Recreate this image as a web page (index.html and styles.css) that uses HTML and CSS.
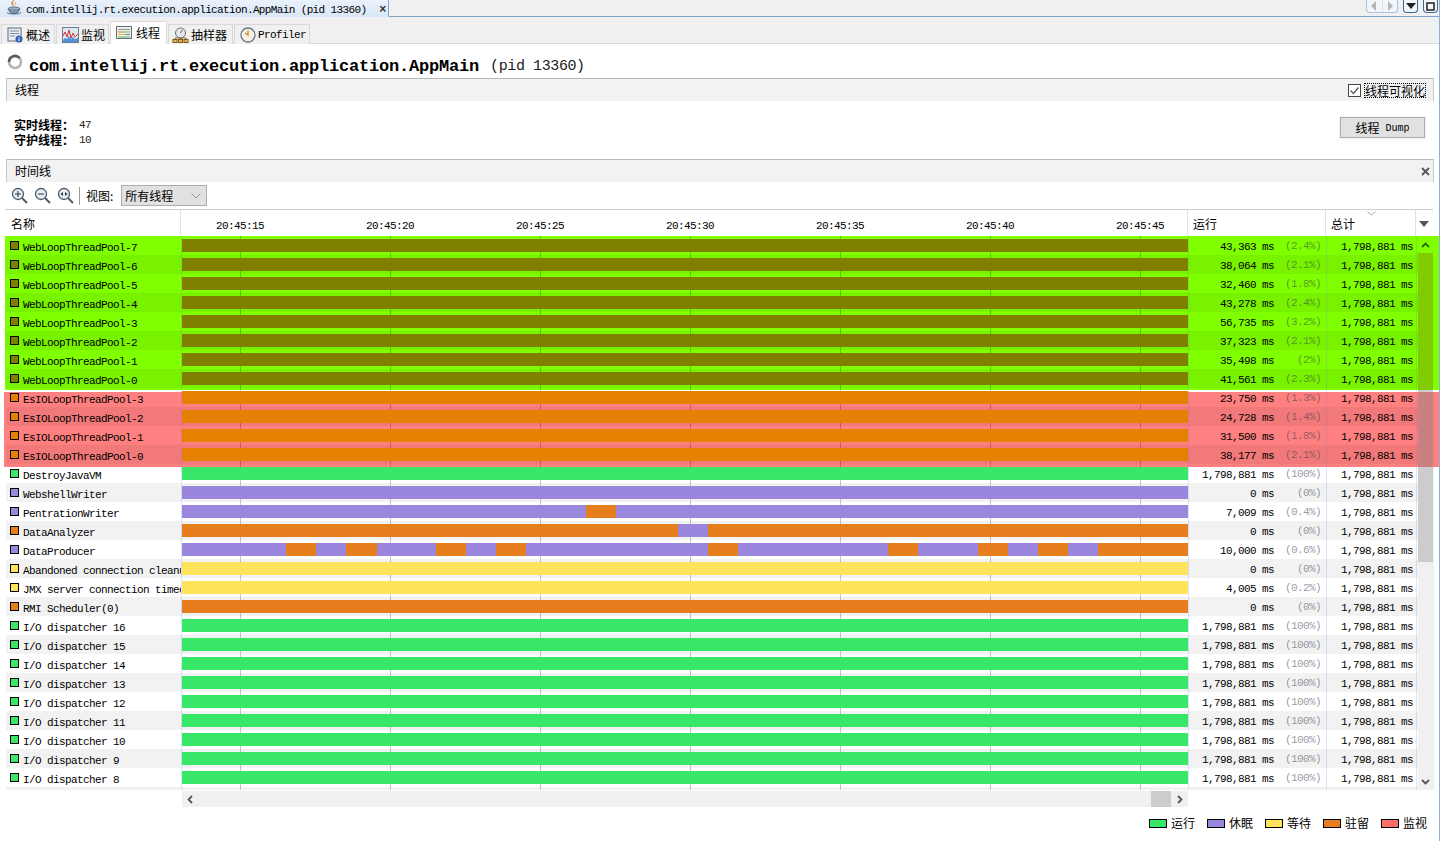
FILE: index.html
```html
<!DOCTYPE html>
<html lang="zh">
<head>
<meta charset="utf-8">
<title>VisualVM</title>
<link rel="stylesheet" href="styles.css">
</head>
<body>
<div class="window">
  <div class="docbar">
    <div class="doctab">
      <svg class="ic-java" width="16" height="16" viewBox="0 0 16 16"><path d="M8 0c1 2-2 3-1 5 .4 1 1 1.500 1 2-2-1-3-2-2.500-3.500C6 2 7.500 2 8 0z" fill="#e8701a"/><path d="M10 3c.5 1.500-1 2-.6 3.500-1-.8-.8-2.500.6-3.500z" fill="#e8a01a"/><ellipse cx="8" cy="10" rx="6" ry="2" fill="#9fb4c8" stroke="#5a6f86"/><path d="M3 10c0 3 2 4.500 5 4.500s5-1.500 5-4.500" fill="#7f96ad" stroke="#4f6379"/><path d="M1 13.500c2 2 12 2 14 0" fill="none" stroke="#5a6f86"/></svg>
      <span class="doctitle">com.intellij.rt.execution.application.AppMain (pid 13360)</span>
      <span class="docclose">×</span>
    </div>
    <div class="docbtns">
      <div class="nav-pair">
        <span class="navbtn"><svg width="8" height="10" viewBox="0 0 8 10"><path d="M6 0v10L1 5z" fill="#b4b4b4"/></svg></span>
        <span class="navbtn"><svg width="8" height="10" viewBox="0 0 8 10"><path d="M2 0v10l5-5z" fill="#b4b4b4"/></svg></span>
      </div>
      <span class="winbtn"><svg width="10" height="6" viewBox="0 0 10 6"><path d="M0 0h10L5 6z" fill="#222"/></svg></span>
      <span class="winbtn"><svg width="9" height="9" viewBox="0 0 9 9"><rect x="1" y="1" width="7" height="7" fill="none" stroke="#222" stroke-width="1.500"/></svg></span>
    </div>
  </div>

  <div class="subtabs">
    <div class="subtab t1">
      <svg width="16" height="16" viewBox="0 0 16 16"><rect x="1" y="1" width="13" height="13" fill="#e8edf3" stroke="#5e6b7b"/><path d="M3 4h9M3 6.500h9M3 9h5" stroke="#7d8a9a"/><circle cx="12" cy="12" r="3.500" fill="#2f62b5"/><path d="M12 10v.8M12 11.500v2.500" stroke="#fff"/></svg>
      <span class="cjk">概述</span>
    </div>
    <div class="subtab t2">
      <svg width="17" height="16" viewBox="0 0 17 16"><rect x=".5" y=".5" width="16" height="15" fill="#dfe7f0" stroke="#6d7c8e"/><path d="M1 9l2-4 2 5 2-7 2 8 2-5 2 4 3-3" fill="none" stroke="#d0342c"/><path d="M1 13l2-2 2 1 2-3 2 3 2-2 2 2 3-1v4H1z" fill="#4f92d8"/></svg>
      <span class="cjk">监视</span>
    </div>
    <div class="subtab t3 active">
      <svg width="16" height="14" viewBox="0 0 16 14"><rect x=".5" y=".5" width="15" height="12" fill="#eef1e4" stroke="#66707c"/><path d="M2 3.500h12" stroke="#8a96a4"/><path d="M2 6h5" stroke="#d97a2b"/><path d="M7 6h7" stroke="#5bb56a"/><path d="M2 8.500h7" stroke="#dcc24a"/><path d="M9 8.500h5" stroke="#8a78cc"/><path d="M2 11h12" stroke="#5bb56a"/></svg>
      <span class="cjk">线程</span>
    </div>
    <div class="subtab t4">
      <svg width="17" height="16" viewBox="0 0 17 16"><circle cx="8.500" cy="6" r="5" fill="#e4e8ee" stroke="#66707c"/><path d="M8.500 6l2-3" stroke="#c0392b"/><path d="M3 11v2M8.500 11v2M14 11v2M3 11h11" stroke="#8a6a2a"/><rect x="1" y="12.500" width="4" height="3" fill="#eab54a" stroke="#7a5a1a"/><rect x="6.500" y="12.500" width="4" height="3" fill="#eab54a" stroke="#7a5a1a"/><rect x="12" y="12.500" width="4" height="3" fill="#eab54a" stroke="#7a5a1a"/></svg>
      <span class="cjk">抽样器</span>
    </div>
    <div class="subtab t5">
      <svg width="16" height="16" viewBox="0 0 16 16"><circle cx="8" cy="8" r="7" fill="#f4f1e6" stroke="#6b7684" stroke-width="1.300"/><path d="M8 3.500V8l-3-2" fill="none" stroke="#d9822b" stroke-width="1.300"/></svg>
      <span class="mono">Profiler</span>
    </div>
  </div>

  <div class="apptitle">
    <svg class="spinner" width="16" height="16" viewBox="0 0 16 16"><circle cx="8" cy="8" r="6" fill="none" stroke="#b4b4b4" stroke-width="2.600"/><path d="M2 8a6 6 0 0 1 10.500-4" fill="none" stroke="#5c5c5c" stroke-width="2.600"/></svg>
    <span class="appname">com.intellij.rt.execution.application.AppMain</span>
    <span class="apppid">(pid 13360)</span>
  </div>

  <div class="section sec-thread">
    <span class="cjk">线程</span>
    <label class="vis">
      <svg width="13" height="13" viewBox="0 0 13 13"><rect x=".5" y=".5" width="12" height="12" fill="#fff" stroke="#444"/><path d="M2.500 6.500l3 3 5-6" fill="none" stroke="#555" stroke-width="1.200"/></svg>
      <span class="vis-label cjk">线程可视化</span>
    </label>
  </div>

  <div class="stats">
    <div class="stat-lines">
      <div class="stat"><b class="cjk">实时线程：</b><span class="mono">47</span></div>
      <div class="stat"><b class="cjk">守护线程：</b><span class="mono">10</span></div>
    </div>
    <div class="dump"><span class="cjk">线程</span><span class="mono dump-l">Dump</span></div>
  </div>

  <div class="section sec-time">
    <span class="cjk">时间线</span>
    <svg class="closex" width="9" height="9" viewBox="0 0 9 9"><path d="M1 1l7 7M8 1L1 8" stroke="#555" stroke-width="1.800"/></svg>
  </div>

  <div class="toolbar">
    <svg width="17" height="17" viewBox="0 0 17 17"><circle cx="7" cy="7" r="5.500" fill="#e6eef7" stroke="#4c5a6a" stroke-width="1.300"/><path d="M11 11l5 5" stroke="#4c5a6a" stroke-width="2"/><path d="M4 7h6M7 4v6" stroke="#333"/></svg>
    <svg width="17" height="17" viewBox="0 0 17 17"><circle cx="7" cy="7" r="5.500" fill="#e6eef7" stroke="#4c5a6a" stroke-width="1.300"/><path d="M11 11l5 5" stroke="#4c5a6a" stroke-width="2"/><path d="M4 7h6" stroke="#333"/></svg>
    <svg width="17" height="17" viewBox="0 0 17 17"><circle cx="7" cy="7" r="5.500" fill="#e6eef7" stroke="#4c5a6a" stroke-width="1.300"/><path d="M11 11l5 5" stroke="#4c5a6a" stroke-width="2"/><path d="M3.500 7L6 5v4zM10.500 7L8 5v4z" fill="#333"/></svg>
    <span class="tool-sep"></span>
    <span class="cjk view-label">视图:</span>
    <div class="select"><span class="cjk">所有线程</span><svg width="10" height="6" viewBox="0 0 10 6"><path d="M.5.500L5 5 9.500.5" fill="none" stroke="#999"/></svg></div>
  </div>

  <div class="thead">
    <div class="th th-name cjk">名称</div>
    <div class="th th-time mono"><span>20:45:15</span><span>20:45:20</span><span>20:45:25</span><span>20:45:30</span><span>20:45:35</span><span>20:45:40</span><span>20:45:45</span></div>
    <div class="th th-run cjk">运行</div>
    <div class="th th-tot cjk">总计<svg class="sort" width="9" height="5" viewBox="0 0 9 5"><path d="M.5.500L4.500 4 8.500.5" fill="none" stroke="#aaa"/></svg></div>
    <div class="th th-menu"><svg width="10" height="6" viewBox="0 0 10 6"><path d="M0 0h10L5 6z" fill="#555"/></svg></div>
  </div>

  <div class="tbody">
    <div class="hl hl-green"></div>
    <div class="hl hl-red"></div>
    <div class="rows mono">
      <div class="row"><div class="name"><i class="sw c-hg"></i><span>WebLoopThreadPool-7</span></div><div class="tl"><div class="bar c-hg"></div></div><div class="run"><span>43,363 ms</span><span class="pct">(2.4%)</span></div><div class="tot">1,798,881 ms</div></div>
      <div class="row"><div class="name"><i class="sw c-hg"></i><span>WebLoopThreadPool-6</span></div><div class="tl"><div class="bar c-hg"></div></div><div class="run"><span>38,064 ms</span><span class="pct">(2.1%)</span></div><div class="tot">1,798,881 ms</div></div>
      <div class="row"><div class="name"><i class="sw c-hg"></i><span>WebLoopThreadPool-5</span></div><div class="tl"><div class="bar c-hg"></div></div><div class="run"><span>32,460 ms</span><span class="pct">(1.8%)</span></div><div class="tot">1,798,881 ms</div></div>
      <div class="row"><div class="name"><i class="sw c-hg"></i><span>WebLoopThreadPool-4</span></div><div class="tl"><div class="bar c-hg"></div></div><div class="run"><span>43,278 ms</span><span class="pct">(2.4%)</span></div><div class="tot">1,798,881 ms</div></div>
      <div class="row"><div class="name"><i class="sw c-hg"></i><span>WebLoopThreadPool-3</span></div><div class="tl"><div class="bar c-hg"></div></div><div class="run"><span>56,735 ms</span><span class="pct">(3.2%)</span></div><div class="tot">1,798,881 ms</div></div>
      <div class="row"><div class="name"><i class="sw c-hg"></i><span>WebLoopThreadPool-2</span></div><div class="tl"><div class="bar c-hg"></div></div><div class="run"><span>37,323 ms</span><span class="pct">(2.1%)</span></div><div class="tot">1,798,881 ms</div></div>
      <div class="row"><div class="name"><i class="sw c-hg"></i><span>WebLoopThreadPool-1</span></div><div class="tl"><div class="bar c-hg"></div></div><div class="run"><span>35,498 ms</span><span class="pct">(2%)</span></div><div class="tot">1,798,881 ms</div></div>
      <div class="row"><div class="name"><i class="sw c-hg"></i><span>WebLoopThreadPool-0</span></div><div class="tl"><div class="bar c-hg"></div></div><div class="run"><span>41,561 ms</span><span class="pct">(2.3%)</span></div><div class="tot">1,798,881 ms</div></div>
      <div class="row"><div class="name"><i class="sw c-hr"></i><span>EsIOLoopThreadPool-3</span></div><div class="tl"><div class="bar c-hr"></div></div><div class="run"><span>23,750 ms</span><span class="pct">(1.3%)</span></div><div class="tot">1,798,881 ms</div></div>
      <div class="row"><div class="name"><i class="sw c-hr"></i><span>EsIOLoopThreadPool-2</span></div><div class="tl"><div class="bar c-hr"></div></div><div class="run"><span>24,728 ms</span><span class="pct">(1.4%)</span></div><div class="tot">1,798,881 ms</div></div>
      <div class="row"><div class="name"><i class="sw c-hr"></i><span>EsIOLoopThreadPool-1</span></div><div class="tl"><div class="bar c-hr"></div></div><div class="run"><span>31,500 ms</span><span class="pct">(1.8%)</span></div><div class="tot">1,798,881 ms</div></div>
      <div class="row"><div class="name"><i class="sw c-hr"></i><span>EsIOLoopThreadPool-0</span></div><div class="tl"><div class="bar c-hr"></div></div><div class="run"><span>38,177 ms</span><span class="pct">(2.1%)</span></div><div class="tot">1,798,881 ms</div></div>
      <div class="row"><div class="name"><i class="sw c-run"></i><span>DestroyJavaVM</span></div><div class="tl"><div class="bar c-run"></div></div><div class="run"><span>1,798,881 ms</span><span class="pct">(100%)</span></div><div class="tot">1,798,881 ms</div></div>
      <div class="row"><div class="name"><i class="sw c-slp"></i><span>WebshellWriter</span></div><div class="tl"><div class="bar c-slp"></div></div><div class="run"><span>0 ms</span><span class="pct">(0%)</span></div><div class="tot">1,798,881 ms</div></div>
      <div class="row"><div class="name"><i class="sw c-slp"></i><span>PentrationWriter</span></div><div class="tl"><div class="bar c-slp"><b class="seg c-prk" style="margin-left:404px;width:30px"></b></div></div><div class="run"><span>7,009 ms</span><span class="pct">(0.4%)</span></div><div class="tot">1,798,881 ms</div></div>
      <div class="row"><div class="name"><i class="sw c-prk"></i><span>DataAnalyzer</span></div><div class="tl"><div class="bar c-prk"><b class="seg c-slp" style="margin-left:496px;width:30px"></b></div></div><div class="run"><span>0 ms</span><span class="pct">(0%)</span></div><div class="tot">1,798,881 ms</div></div>
      <div class="row"><div class="name"><i class="sw c-slp"></i><span>DataProducer</span></div><div class="tl"><div class="bar c-slp"><b class="seg c-prk" style="margin-left:104px;width:30px"></b><b class="seg c-prk" style="margin-left:30px;width:31px"></b><b class="seg c-prk" style="margin-left:59px;width:30px"></b><b class="seg c-prk" style="margin-left:30px;width:30px"></b><b class="seg c-prk" style="margin-left:182px;width:30px"></b><b class="seg c-prk" style="margin-left:150px;width:30px"></b><b class="seg c-prk" style="margin-left:60px;width:30px"></b><b class="seg c-prk" style="margin-left:30px;width:30px"></b><b class="seg c-prk" style="margin-left:30px;width:90px"></b></div></div><div class="run"><span>10,000 ms</span><span class="pct">(0.6%)</span></div><div class="tot">1,798,881 ms</div></div>
      <div class="row"><div class="name"><i class="sw c-wait"></i><span>Abandoned connection cleanup</span></div><div class="tl"><div class="bar c-wait"></div></div><div class="run"><span>0 ms</span><span class="pct">(0%)</span></div><div class="tot">1,798,881 ms</div></div>
      <div class="row"><div class="name"><i class="sw c-wait"></i><span>JMX server connection timeout</span></div><div class="tl"><div class="bar c-wait"></div></div><div class="run"><span>4,005 ms</span><span class="pct">(0.2%)</span></div><div class="tot">1,798,881 ms</div></div>
      <div class="row"><div class="name"><i class="sw c-prk"></i><span>RMI Scheduler(0)</span></div><div class="tl"><div class="bar c-prk"></div></div><div class="run"><span>0 ms</span><span class="pct">(0%)</span></div><div class="tot">1,798,881 ms</div></div>
      <div class="row"><div class="name"><i class="sw c-run"></i><span>I/O dispatcher 16</span></div><div class="tl"><div class="bar c-run"></div></div><div class="run"><span>1,798,881 ms</span><span class="pct">(100%)</span></div><div class="tot">1,798,881 ms</div></div>
      <div class="row"><div class="name"><i class="sw c-run"></i><span>I/O dispatcher 15</span></div><div class="tl"><div class="bar c-run"></div></div><div class="run"><span>1,798,881 ms</span><span class="pct">(100%)</span></div><div class="tot">1,798,881 ms</div></div>
      <div class="row"><div class="name"><i class="sw c-run"></i><span>I/O dispatcher 14</span></div><div class="tl"><div class="bar c-run"></div></div><div class="run"><span>1,798,881 ms</span><span class="pct">(100%)</span></div><div class="tot">1,798,881 ms</div></div>
      <div class="row"><div class="name"><i class="sw c-run"></i><span>I/O dispatcher 13</span></div><div class="tl"><div class="bar c-run"></div></div><div class="run"><span>1,798,881 ms</span><span class="pct">(100%)</span></div><div class="tot">1,798,881 ms</div></div>
      <div class="row"><div class="name"><i class="sw c-run"></i><span>I/O dispatcher 12</span></div><div class="tl"><div class="bar c-run"></div></div><div class="run"><span>1,798,881 ms</span><span class="pct">(100%)</span></div><div class="tot">1,798,881 ms</div></div>
      <div class="row"><div class="name"><i class="sw c-run"></i><span>I/O dispatcher 11</span></div><div class="tl"><div class="bar c-run"></div></div><div class="run"><span>1,798,881 ms</span><span class="pct">(100%)</span></div><div class="tot">1,798,881 ms</div></div>
      <div class="row"><div class="name"><i class="sw c-run"></i><span>I/O dispatcher 10</span></div><div class="tl"><div class="bar c-run"></div></div><div class="run"><span>1,798,881 ms</span><span class="pct">(100%)</span></div><div class="tot">1,798,881 ms</div></div>
      <div class="row"><div class="name"><i class="sw c-run"></i><span>I/O dispatcher 9</span></div><div class="tl"><div class="bar c-run"></div></div><div class="run"><span>1,798,881 ms</span><span class="pct">(100%)</span></div><div class="tot">1,798,881 ms</div></div>
      <div class="row"><div class="name"><i class="sw c-run"></i><span>I/O dispatcher 8</span></div><div class="tl"><div class="bar c-run"></div></div><div class="run"><span>1,798,881 ms</span><span class="pct">(100%)</span></div><div class="tot">1,798,881 ms</div></div>
      <div class="row row-cut"><div class="name"></div><div class="tl"></div><div class="run"></div><div class="tot"></div></div>
    </div>
    <div class="vscroll">
      <svg class="up" width="9" height="6" viewBox="0 0 9 6"><path d="M1 5l3.500-3.500L8 5" fill="none" stroke="#2c6a00" stroke-width="1.800"/></svg>
      <div class="vthumb"></div>
      <svg class="down" width="9" height="6" viewBox="0 0 9 6"><path d="M1 1l3.500 3.500L8 1" fill="none" stroke="#555" stroke-width="1.800"/></svg>
    </div>
  </div>

  <div class="hscroll">
    <svg width="6" height="9" viewBox="0 0 6 9"><path d="M5 1L1.500 4.500 5 8" fill="none" stroke="#555" stroke-width="1.800"/></svg>
    <div class="hthumb"></div>
    <svg width="6" height="9" viewBox="0 0 6 9"><path d="M1 1l3.500 3.500L1 8" fill="none" stroke="#555" stroke-width="1.800"/></svg>
  </div>

  <div class="legend cjk">
    <div class="lg"><i class="lg-sw c-run"></i>运行</div>
    <div class="lg"><i class="lg-sw c-slp"></i>休眠</div>
    <div class="lg"><i class="lg-sw c-wait"></i>等待</div>
    <div class="lg"><i class="lg-sw c-prk"></i>驻留</div>
    <div class="lg"><i class="lg-sw c-mon"></i>监视</div>
  </div>
</div>
</body>
</html>
```

FILE: styles.css
```css
* { box-sizing: border-box; }
html, body { margin: 0; padding: 0; }
body {
  width: 1440px;
  height: 841px;
  overflow: hidden;
  background: #fff;
  color: #000;
  font: 12px "Noto Sans CJK SC", sans-serif;
}
.cjk { font-family: "Noto Sans CJK SC", "Noto Sans", sans-serif; font-size: 12px; line-height: 16px; }
.mono { font-family: "Liberation Mono", "Noto Sans CJK SC", monospace; font-size: 11px; letter-spacing: -0.6px; }

.window {
  width: 1440px;
  height: 841px;
  display: flex;
  flex-direction: column;
  border-right: 1px solid #8fb0cf;
  overflow: hidden;
}

/* document tab strip */
.docbar {
  height: 17px;
  flex: none;
  display: flex;
  justify-content: space-between;
  background: #f0f0f0;
  border-bottom: 1px solid #7fa4c8;
}
.doctab {
  width: 389px;
  height: 17px;
  display: flex;
  align-items: center;
  padding: 3px 0 0 6px;
  background: linear-gradient(#eaf2fb, #d9e7f6);
  border-right: 1px solid #7fa4c8;
  border-bottom: 1px solid #d9e7f6;
}
.ic-java { flex: none; margin-top: -5px; }
.doctitle {
  margin-left: 4px;
  font-family: "Liberation Mono", monospace;
  font-size: 11px;
  letter-spacing: -0.63px;
  white-space: nowrap;
}
.docclose { margin-left: 13px; margin-top: -2px; font: bold 12px "Liberation Sans", sans-serif; color: #333; }
.docbtns { display: flex; align-items: flex-start; gap: 5px; padding-right: 1px; }
.nav-pair { display: flex; width: 32px; height: 13px; border: 1px solid #a9c2da; border-top: 0; border-radius: 0 0 4px 4px; background: #f2f6fa; }
.navbtn { flex: 1; display: flex; align-items: center; justify-content: center; }
.navbtn + .navbtn { border-left: 1px solid #d5e1ec; }
.winbtn { width: 15px; height: 13px; display: flex; align-items: center; justify-content: center; border: 1px solid #3c6a96; border-top: 0; border-radius: 0 0 4px 4px; background: #f2f6fa; }

/* sub tabs */
.subtabs {
  height: 27px;
  flex: none;
  display: flex;
  align-items: flex-end;
  padding-left: 1px;
  background: #f0f0f0;
  border-bottom: 1px solid #d9d9d9;
}
.subtab {
  height: 20px;
  margin-bottom: -1px;
  display: flex;
  align-items: center;
  gap: 2px;
  padding-left: 5px;
  border: 1px solid #d9d9d9;
  border-bottom: 0;
  margin-right: 1px;
  background: #f0f0f0;
  line-height: 16px;
}
.subtab.t1 { width: 54px; gap: 3px; }
.subtab.t2 { width: 53px; }
.subtab.t3 { width: 57px; height: 23px; background: #fff; gap: 4px; padding-bottom: 1px; }
.subtab.t4 { width: 65px; padding-left: 3px; }
.subtab.t5 { width: 76px; }

/* title */
.apptitle {
  height: 34px;
  flex: none;
  display: flex;
  align-items: center;
  padding: 10px 0 0 7px;
}
.spinner { flex: none; margin-top: -9px; }
.appname {
  margin-left: 6px;
  font-family: "Liberation Mono", monospace;
  font-weight: bold;
  font-size: 17px;
  letter-spacing: -0.2px;
  white-space: nowrap;
}
.apppid {
  margin-left: 11px;
  font-family: "Liberation Mono", monospace;
  font-size: 15px;
  letter-spacing: -0.4px;
  color: #222;
}

/* section strips */
.section {
  flex: none;
  height: 23px;
  margin: 0 6px;
  width: 1428px;
  display: flex;
  align-items: center;
  justify-content: space-between;
  padding: 0 3px 0 8px;
  background: #f2f2f2;
  border-top: 1px solid #b8b8b8;
  border-left: 1px solid #c8c8c8;
  border-right: 1px solid #c8c8c8;
}
.vis { display: flex; align-items: center; gap: 4px; margin-right: 5px; }
.vis-label { outline: 1px dotted #000; line-height: 13px; height: 13px; display: block; }

.stats {
  flex: none;
  height: 58px;
  display: flex;
  justify-content: space-between;
  padding: 16px 14px 0 14px;
}
.stat-lines { display: flex; flex-direction: column; }
.stat { height: 15px; display: flex; align-items: center; gap: 5px; }
.stat b { font-weight: 700; line-height: 15px; }
.stat .mono { color: #222; }
.dump {
  width: 85px;
  height: 21px;
  display: flex;
  align-items: center;
  justify-content: center;
  gap: 6px;
  background: #e1e1e1;
  border: 1px solid #adadad;
  box-shadow: 0 0 0 1px #f3f3f3;
}
.dump-l { font-size: 10px; letter-spacing: 0; margin-top: 1px; }

/* toolbar */
.toolbar {
  flex: none;
  height: 27px;
  display: flex;
  align-items: center;
  padding: 0 0 0 11px;
  gap: 6px;
}
.tool-sep { width: 1px; height: 18px; background: #9a9a9a; margin-left: -1px; }
.select {
  width: 86px;
  height: 21px;
  margin-left: 2px;
  display: flex;
  align-items: center;
  justify-content: space-between;
  padding: 0 5px 0 3px;
  background: #e1e1e1;
  border: 1px solid #adadad;
}

/* table header */
.thead {
  flex: none;
  height: 27px;
  display: grid;
  grid-template-columns: 176px 1006px 138px 91px 17px;
  margin-left: 5px;
  border-top: 1px solid #cfcfcf;
  width: 1428px;
}
.th { display: flex; align-items: center; padding-top: 2px; position: relative; }
.th-name { padding-left: 6px; border-right: 1px solid #e2e2e2; }
.th-time { padding-left: 35px; gap: 102px; padding-top: 6px; white-space: nowrap; }
.th-time span { width: 48px; flex: none; }
.th-run { padding-left: 5px; border-left: 1px solid #e2e2e2; }
.th-tot { padding-left: 5px; border-left: 1px solid #e2e2e2; border-right: 1px solid #e2e2e2; }
.sort { position: absolute; left: 41px; top: 1px; }
.th-menu { justify-content: center; padding-right: 1px; }

/* table body */
.tbody {
  flex: none;
  position: relative;
  height: 554px;
  display: flex;
  align-items: flex-start;
  padding-left: 6px;
}
.hl { position: absolute; right: 0; }
.hl-green { top: 0; left: 5px; height: 154px; background: #80ff00; }
.hl-red { top: 156px; left: 4px; height: 75px; background: #ff8080; }
.rows { position: relative; width: 1412px; height: 554px; overflow: hidden; }
.row {
  height: 19px;
  display: grid;
  grid-template-columns: 176px 1006px 138px 91px;
}
.row:nth-child(even) { background: rgba(0, 0, 0, 0.05); }
.row-cut { height: 3px; }
.name {
  display: flex;
  align-items: flex-start;
  overflow: hidden;
  white-space: nowrap;
  padding: 5px 0 0 4px;
  border-right: 1px solid rgba(90, 120, 240, 0.2);
}
.name span { line-height: 12px; margin-left: 4px; margin-top: 1px; }
.sw { flex: none; width: 9px; height: 9px; border: 1px solid #000; }
.tl {
  padding-top: 3px;
  background-image: linear-gradient(to right, rgba(0, 0, 0, 0.22) 1px, transparent 1px);
  background-size: 150px 100%;
  background-position: 58px 0;
}
.bar { height: 13px; display: flex; }
.seg { display: block; height: 13px; flex: none; }
.run, .tot {
  display: flex;
  align-items: center;
  justify-content: flex-end;
  white-space: nowrap;
  padding-top: 2px;
  border-left: 1px solid rgba(90, 120, 240, 0.2);
}
.run { padding-right: 5px; }
.tot { padding-right: 3px; border-right: 1px solid rgba(90, 120, 240, 0.2); }
.pct { width: 47px; margin-top: -1px; text-align: right; color: rgba(40, 50, 70, 0.5); }

.c-hg { background: #808000; }
.c-hr { background: #e68000; }
.c-run { background: #38e668; }
.c-slp { background: #9a86dc; }
.c-prk { background: #e67e1e; }
.c-wait { background: #ffe35a; }
.c-mon { background: #ff6e66; }

/* vertical scrollbar */
.vscroll {
  position: relative;
  width: 16px;
  height: 554px;
  flex: none;
  background: linear-gradient(transparent 231px, #f0f0f0 231px);
  padding-top: 17px;
}
.vthumb {
  width: 15px;
  height: 309px;
  background: linear-gradient(#80cc00 137px, #cccccc 137px, #cccccc 139px, #c98080 139px, #c98080 214px, #cccccc 214px);
}
.up { position: absolute; left: 3px; top: 6px; }
.down { position: absolute; left: 3px; top: 543px; }

/* horizontal scrollbar */
.hscroll {
  flex: none;
  width: 1006px;
  height: 16px;
  margin: 1px 0 0 182px;
  display: flex;
  align-items: center;
  padding: 0 5px;
  background: #f0f0f0;
}
.hthumb { width: 20px; height: 16px; margin-left: auto; margin-right: 6px; background: #cccccc; }

/* legend */
.legend {
  flex: none;
  display: flex;
  justify-content: flex-end;
  gap: 12px;
  padding: 8px 12px 0 0;
}
.lg { display: flex; align-items: center; gap: 4px; line-height: 16px; }
.lg-sw { width: 18px; height: 9px; border: 1px solid #000; }
```
